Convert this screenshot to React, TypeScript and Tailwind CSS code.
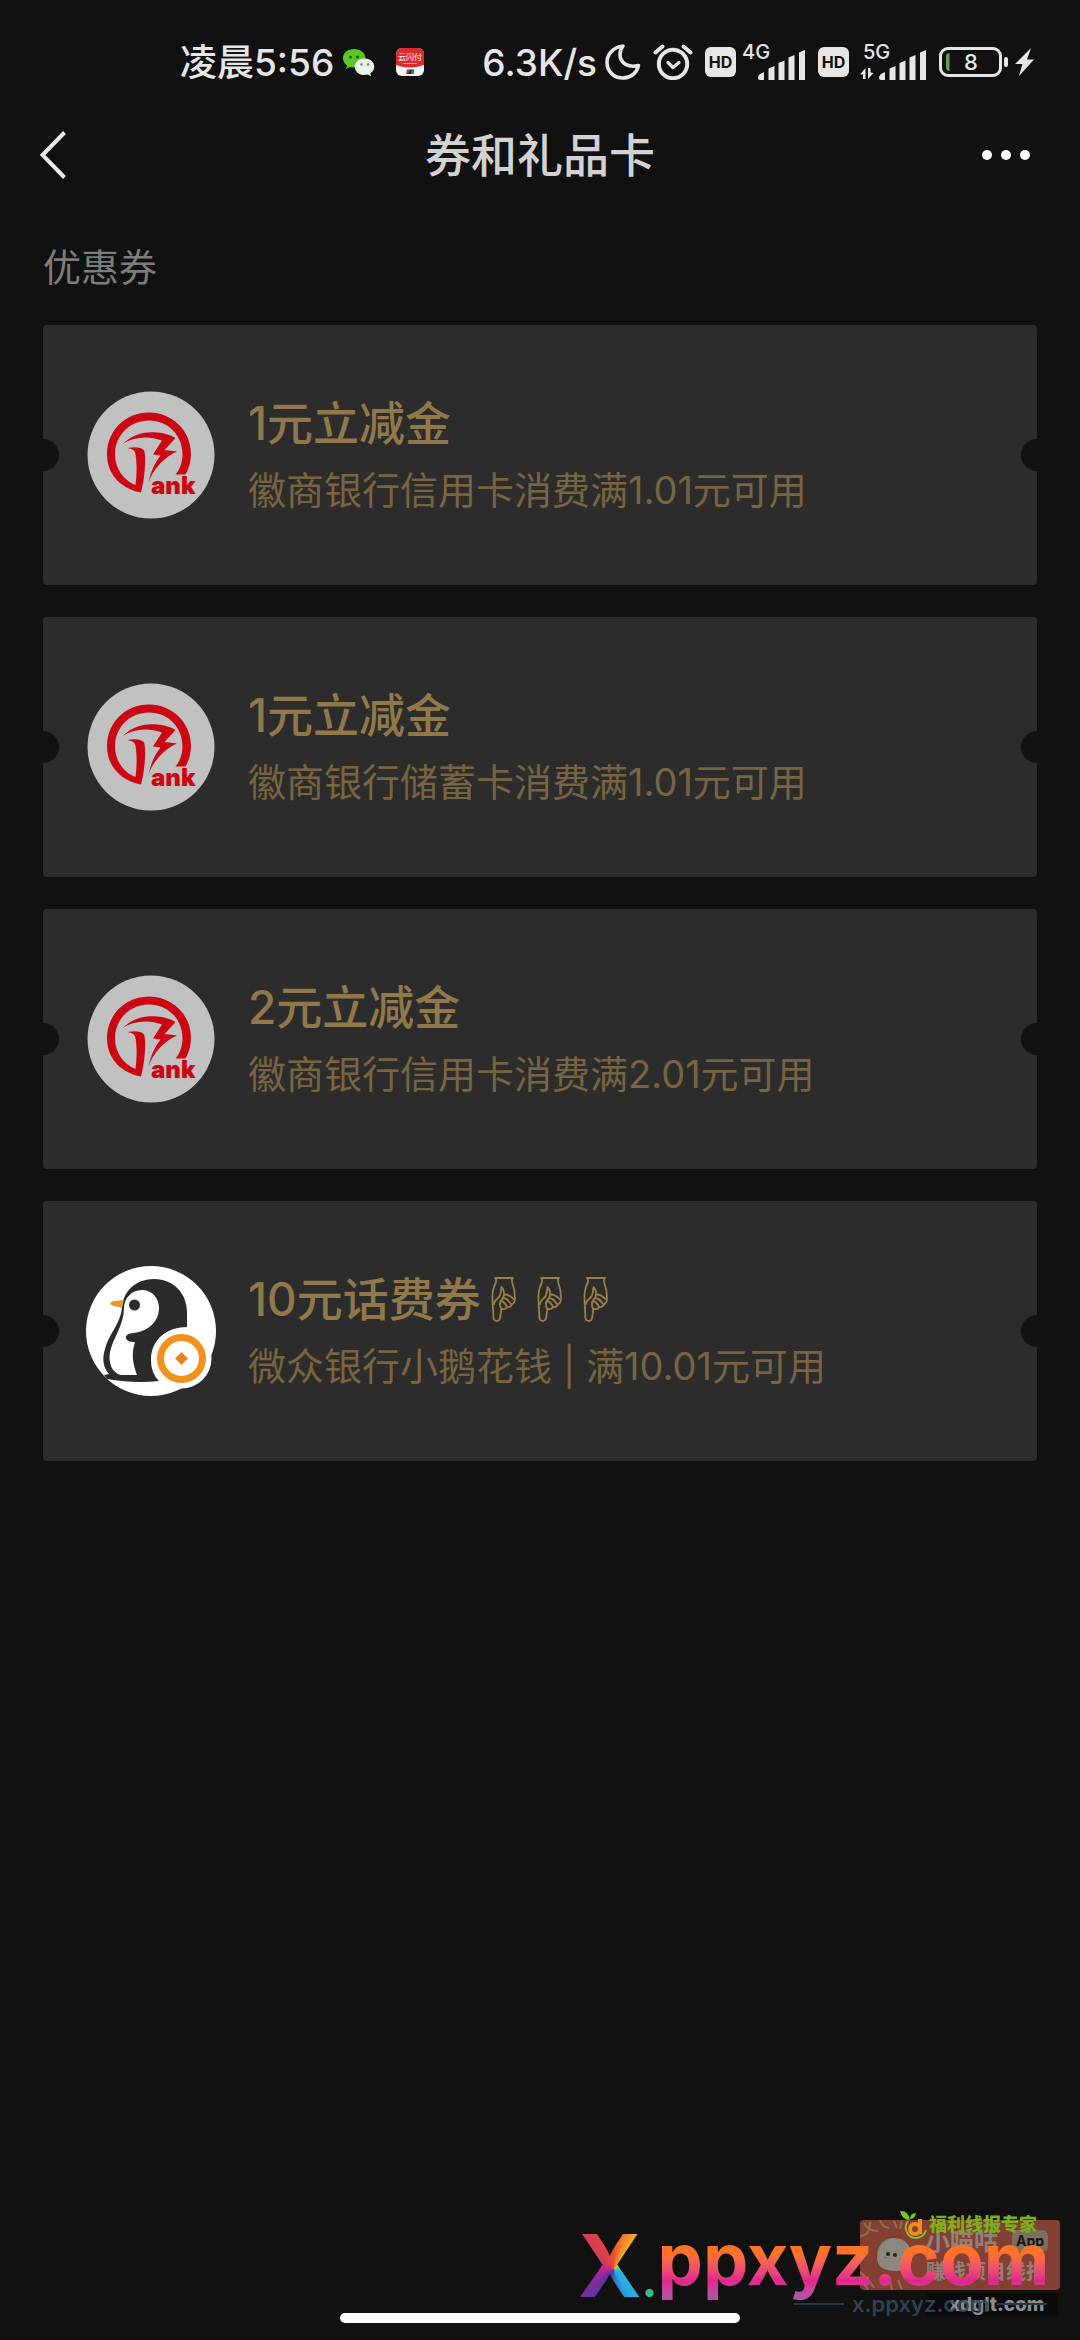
import { ReactNode } from "react";

type Coupon = {
  id: number;
  title: string;
  description: string;
  brand: "huishang" | "webank";
  hands?: number;
};

const coupons: Coupon[] = [
  {
    id: 1,
    title: "1元立减金",
    description: "徽商银行信用卡消费满1.01元可用",
    brand: "huishang",
  },
  {
    id: 2,
    title: "1元立减金",
    description: "徽商银行储蓄卡消费满1.01元可用",
    brand: "huishang",
  },
  {
    id: 3,
    title: "2元立减金",
    description: "徽商银行信用卡消费满2.01元可用",
    brand: "huishang",
  },
  {
    id: 4,
    title: "10元话费券",
    description: "微众银行小鹅花钱 | 满10.01元可用",
    brand: "webank",
    hands: 3,
  },
];

const WechatIcon = () => (
  <svg className="h-[30px] w-[34px]" viewBox="0 0 34 30">
    <path
      d="M12 2C5.400 2 1 6 1 11.300c0 3 1.500 5.400 4 7.200L4 22l4-2.100c1.300.4 2.600.5 4 .5 6.400 0 11.500-3.800 11.500-9.100S18.600 2 12 2z"
      fill="#5ac62b"
    />
    <circle cx="8.500" cy="10" r="1.500" fill="#1d5c10" />
    <circle cx="15.500" cy="10" r="1.500" fill="#1d5c10" />
    <path
      d="M22.500 11.500c-5.500 0-9.700 3.500-9.700 8.200s4.200 8.300 9.700 8.300c1.200 0 2.300-.2 3.300-.5l3.300 1.700-.8-3c2.400-1.600 4-3.800 4-6.500 0-4.700-4.300-8.200-9.800-8.200z"
      fill="#e9f3e4"
    />
    <circle cx="19.500" cy="17.500" r="1.300" fill="#7d8a78" />
    <circle cx="26" cy="17.500" r="1.300" fill="#7d8a78" />
  </svg>
);

const UnionPayIcon = () => (
  <svg className="h-7 w-7" viewBox="0 0 28 28">
    <rect width="28" height="28" rx="6" fill="#f5f5f5" />
    <path d="M0 17V6a6 6 0 0 1 6-6h16a6 6 0 0 1 6 6v11q-14 5-28 0z" fill="#dd2a2c" />
    <text x="14" y="12" fontSize="8" textAnchor="middle" fill="#fff" fontFamily="Noto Sans CJK SC, sans-serif">
      云闪付
    </text>
    <path d="M7 15.500h14" stroke="#f0a0a0" />
    <path d="M11 21.500h3l-1 4.500h-3z" fill="#c33" />
    <path d="M13.500 21.500h3l-1 4.500h-3z" fill="#234" />
    <path d="M16 21.500h2.500l-1 4.500h-3z" fill="#1b7f77" />
  </svg>
);

const MoonIcon = () => (
  <svg className="h-9 w-9" viewBox="0 0 36 36" fill="none" stroke="#e6e6e6" strokeWidth="3.600" strokeLinejoin="round">
    <path d="M18 2C8.500 3 2 10 2 18.500 2 27.500 9 34 17.500 34c8 0 14-4.500 16-12.500-9.500 2.500-18.500-2-18.500-11 0-3 1-6 3-8.500z" />
  </svg>
);

const AlarmIcon = () => (
  <svg className="h-9 w-10" viewBox="0 0 40 36" fill="none" stroke="#e6e6e6" strokeLinecap="round" strokeLinejoin="round">
    <circle cx="20" cy="20" r="14.200" strokeWidth="4" />
    <path d="M2.500 8.500l7-6M37.500 8.500l-7-6" strokeWidth="4" />
    <path d="M15 18.500l5 5 6-5" strokeWidth="3.200" />
  </svg>
);

const HdBadge = () => (
  <span className="flex h-[30px] w-[31px] items-center justify-center rounded-[6px] bg-[#e6e6e6] text-[16px] leading-none font-bold text-[#111]">
    HD
  </span>
);

const SignalIcon = ({ label, data }: { label: string; data?: boolean }) => (
  <svg
    className={data ? "h-9 w-[66px] overflow-visible" : "h-9 w-[64px] overflow-visible"}
    viewBox={data ? "-2 0 66 36" : "0 0 64 36"}
    fill="#e6e6e6"
  >
    <text x="0" y="15" fontSize="20" fontWeight="500" fontFamily="Inter, sans-serif">
      {label}
    </text>
    {data && <path d="M2.500 24v11h-2.500v-4.500L-3 30.500zM5 35V24h2.500v4.500L10.500 29z" />}
    <path d="M16 34q0-4 6-6v8h-4q-2 0-2-2zM26.500 24.500l6-2.500v14h-6zM36.500 19l6-2.500V36h-6zM46.500 13.500l6-2.500v25h-6zM57 8.500L63 6v30h-6z" />
  </svg>
);

const BatteryIcon = () => (
  <svg className="h-9 w-[70px]" viewBox="0 0 70 36" fill="none">
    <rect x="1.500" y="4.500" width="60" height="27" rx="7.500" stroke="#e6e6e6" strokeWidth="3" />
    <path d="M10.500 9v18Q7 27 7 23V13q0-4 3.500-4z" fill="#5fa052" />
    <rect x="65" y="13" width="4" height="10" rx="2" fill="#e6e6e6" />
    <text x="32" y="26" fontSize="22" textAnchor="middle" fill="#e6e6e6" fontWeight="500" fontFamily="Inter, sans-serif">
      8
    </text>
  </svg>
);

const BoltIcon = () => (
  <svg className="h-9 w-5" viewBox="0 0 20 36" fill="#e6e6e6">
    <path d="M16 4L0 20h7.500L4 32l15-16.500h-7z" />
  </svg>
);

const StatusBar = () => (
  <div className="flex h-[62px] items-center justify-between pr-[45px] pl-[180px] text-[#e6e6e6]">
    <div className="flex items-center">
      <span className="text-[37px] leading-none font-medium">凌晨5:56</span>
      <span className="ml-2">
        <WechatIcon />
      </span>
      <span className="ml-5">
        <UnionPayIcon />
      </span>
    </div>
    <div className="flex items-center gap-3">
      <div className="flex items-center gap-2">
        <span className="text-[37px] leading-none font-medium">6.3K/s</span>
        <MoonIcon />
      </div>
      <AlarmIcon />
      <div className="flex items-center gap-[6px]">
        <HdBadge />
        <SignalIcon label="4G" />
      </div>
      <HdBadge />
      <SignalIcon label="5G" data />
      <div className="flex items-center gap-[6px]">
        <BatteryIcon />
        <BoltIcon />
      </div>
    </div>
  </div>
);

const NavBar = () => (
  <header className="grid grid-cols-[1fr_auto_1fr] items-center px-10">
    <button type="button" aria-label="返回" className="justify-self-start">
      <svg className="h-12 w-7" viewBox="0 0 28 48" fill="none" stroke="#e8e8e8" strokeWidth="4">
        <path d="M24.500 1.500L2.500 24l22 22.500" />
      </svg>
    </button>
    <h1 className="text-[46px] leading-[64px] font-medium text-[#d2d2d2]">券和礼品卡</h1>
    <button type="button" aria-label="更多" className="flex gap-[9px] justify-self-end pr-[10px]">
      <span className="size-[10px] rounded-full bg-white" />
      <span className="size-[10px] rounded-full bg-white" />
      <span className="size-[10px] rounded-full bg-white" />
    </button>
  </header>
);

const HuishangLogo = () => (
  <svg className="size-[130px]" viewBox="6 5 130 130">
    <circle cx="71" cy="70" r="63.500" fill="#c1c1c1" />
    <g fill="#cb0714">
      <path d="M61 107.500C41 104 27 89 27 69.500 27 45 46 27.500 69 27.500s42 18 42 41.500c0 7.500-2 14.500-5.500 20.500H95.500c4.500-5 7-12.500 7-20C102.500 50 88 35.500 69 35.500S35 50 35 69.500c0 14 8.500 26 20.500 30.500 1.500-12 1.500-22 0-31-.5-3.500-3-5-8-6 7-1.500 14-1 16.500 2.500 2 4 1.500 26-3 42z" />
      <path d="M42.500 59C54 48.500 66 46.500 77 47.500c7 .5 13 2 18.500 5.500L84.500 65l12.500 1.500C85 71.500 73 84 68.500 97.500c2-10 6-19.500 12-27L73 69.500l9-14C69 51 55 51.500 42.500 59z" />
    </g>
    <text x="71" y="108.500" fontSize="24" fontWeight="900" fill="#cb0714" fontFamily="Inter, sans-serif">
      ank
    </text>
  </svg>
);

const WebankLogo = () => (
  <svg className="size-[130px]" viewBox="6 6 130 130">
    <circle cx="71" cy="71" r="65" fill="#fff" />
    <path
      d="M42 48C43 30 57 19 74 19c20 0 33 15 33 33v15c-18 0-36 11-36 33 0 9 3 16 8 21-17 2-35 1-52-2l-3-4 5-1c-6-6-7-16-4-25 4-16 15-24 17-41z"
      fill="#2b2b2b"
    />
    <path
      d="M44 48c0-9 7-18 18-18 10 0 17 8 17 18 0 14-11 23-25 25-6 0-9 3-8 5 1 3 4 4 9 4-4 12-2 22 2 33H41c-9-2-13-12-11-23 3-14 14-27 14-44z"
      fill="#fff"
    />
    <path d="M44 40l-10 1c-5 1-5 4 0 5l8 2z" fill="#e8962e" />
    <circle cx="54.500" cy="45" r="5.500" fill="#2b2b2b" />
    <circle cx="101.500" cy="98.500" r="30" fill="#fff" />
    <circle cx="101.500" cy="98.500" r="21" fill="none" stroke="#f0921c" strokeWidth="7" />
    <path d="M101.500 92l6.500 6.500-6.500 6.500-6.500-6.500z" fill="#ee8220" />
  </svg>
);

const HandDown = () => (
  <svg className="h-[46px] w-[46px]" viewBox="0 0 46 46" fill="none" stroke="#9a7f49" strokeWidth="1.800" strokeLinecap="round" strokeLinejoin="round">
    <path d="M14 2h18M15 2v4c-3 6-4 11-3.500 18l1 18c.5 4 6 4 6.500 0l1.500-9c3 .5 5-.5 5.500-2 3 .5 4.500-1 5-3 2.500-.5 3-3 3-6 0-6-1-11-3-16V2" />
    <path d="M13 28c0-3 3-5 5.500-7.500 1-2 1.500-5 2-9.500 3 3 3 6.500 2 10l-3 4.500c-1 2-1 4 .5 7M20 25c3 0 4.500 3 6 6M22 22c3 0 6 3 8 6M24 18.500c3 0 6 2 8.500 4.500" />
  </svg>
);

const CouponCard = ({ coupon, children }: { coupon: Coupon; children: ReactNode }) => (
  <li className="relative flex h-[260px] items-center gap-8 overflow-hidden rounded-[4px] bg-[#2c2c2c] px-[43px]">
    <span className="absolute top-[114px] -left-4 size-8 rounded-full bg-[#111]" />
    <span className="absolute top-[114px] -right-4 size-8 rounded-full bg-[#111]" />
    {children}
    <div className="pt-[6px]">
      <h2 className="flex items-center text-[46px] leading-[64px] font-medium text-[#91784a]">
        {coupon.title}
        {Array.from({ length: coupon.hands ?? 0 }, (_, i) => (
          <HandDown key={i} />
        ))}
      </h2>
      <p className="text-[38px] leading-[70px] font-normal text-[#786441]">{coupon.description}</p>
    </div>
  </li>
);

const Watermark = () => (
  <div aria-hidden="true" className="pointer-events-none absolute right-0 bottom-0 h-[140px] w-[520px] overflow-hidden">
    <div className="absolute top-5 left-[300px] h-[70px] w-[200px] overflow-hidden rounded-[4px] bg-[#823f32]">
      <svg className="absolute top-0 left-0 h-[70px] w-[60px]" viewBox="0 0 60 70" fill="none">
        <path d="M0 16q10 0 10-14M4 3q4 8 14 8M20 0q2 7 9 8M34 1l3 7M42 1l-2 8M0 52q8 6 14 16M0 62q6 2 8 8M30 60l2 10M38 60l4 9" stroke="#92704a" strokeWidth="2" />
        <path d="M17 38c0-12 6-20 17-20 12 0 18 9 18 21 0 8-6 12-17 12-12 0-18-5-18-13z" fill="#8c877f" />
        <circle cx="28" cy="34" r="2" fill="#222" />
        <circle cx="35" cy="35" r="2" fill="#222" />
        <path d="M24 37l3 1" stroke="#a44" />
      </svg>
      <span className="absolute top-[10px] left-[66px] text-[24px] leading-none font-bold text-[#93807b]">小喵咕</span>
      <span className="absolute top-[10px] left-[152px] rounded-[6px] bg-[#7c6f62] px-1 text-[14px] leading-[22px] font-bold text-[#161616]">
        App
      </span>
      <span className="absolute top-[42px] left-[66px] text-[20px] leading-none font-bold whitespace-nowrap text-[#93807b]">
        赚钱项目线报
      </span>
    </div>
    <div className="absolute top-[93px] left-[367px] h-[23px] w-[131px] bg-[#0a0a0a] pl-[22px] text-[19px] leading-[23px] font-extrabold text-[#8b8e90]">
      xdglt.com
    </div>
    <div className="absolute top-[90px] left-[234px] flex items-center gap-2 text-[22px] leading-[28px] font-semibold text-[#34495a]/90">
      <span className="h-[2px] w-[50px] bg-[#263a4a]" />
      x.ppxyz.com
      <span className="h-[2px] w-[50px] bg-[#263a4a]" />
    </div>
    <div className="absolute top-[10px] left-[18px] flex items-start font-bold">
      <div className="flex items-baseline leading-[112px]">
        <span className="bg-[conic-gradient(from_0deg_at_56%_53%,#f04a2a_0deg,#f7c12c_40deg,#22c3d6_100deg,#2aa8e0_150deg,#3a3aa0_200deg,#b0269a_260deg,#d03a60_310deg,#f04a2a_360deg)] bg-clip-text text-[86px] text-transparent">
          X
        </span>
        <span className="text-[48px] text-[#2fbf8f]">.</span>
      </div>
      <span className="bg-linear-to-b from-[#ff7228] from-45% via-[#e0268c] via-72% to-[#a05aa8] to-95% bg-clip-text text-[72px] leading-[98px] text-transparent">
        ppxyz.com
      </span>
    </div>
    <div className="absolute top-[10px] left-[340px] flex items-center">
      <svg className="h-[30px] w-[27px]" viewBox="0 0 27 30" fill="none">
        <path d="M0 1q8-1 10 9Q2 10 0 1zM10 9q0-6 6-6-1 6-6 6z" fill="#7cc62a" />
        <path d="M8 11c-6 8 1 18 9 17 5-1 8-4 9-8" stroke="#8ab82c" strokeWidth="2" />
        <circle cx="15" cy="19" r="5" stroke="#f28c1c" strokeWidth="4" />
        <path d="M20 9v15" stroke="#f28c1c" strokeWidth="4" />
      </svg>
      <span className="pl-[2px] text-[18px] leading-none font-black text-[#80ad1e]">福利线报专家</span>
    </div>
  </div>
);

export default function App() {
  return (
    <div className="relative flex min-h-screen flex-col bg-[#111] pt-[31px] font-['Inter','Noto_Sans_CJK_SC',sans-serif]">
      <StatusBar />
      <div className="pt-[30px]">
        <NavBar />
      </div>
      <main className="flex-1 px-[43px] pt-[52px]">
        <p className="text-[38px] leading-[56px] font-normal text-[#7c7c7c]">优惠券</p>
        <ul className="flex flex-col gap-8 pt-[30px]">
          {coupons.map((coupon) => (
            <CouponCard key={coupon.id} coupon={coupon}>
              {coupon.brand === "huishang" ? <HuishangLogo /> : <WebankLogo />}
            </CouponCard>
          ))}
        </ul>
      </main>
      <Watermark />
      <div className="mb-[17px] h-[10px] w-[400px] self-center rounded-full bg-white" />
    </div>
  );
}
